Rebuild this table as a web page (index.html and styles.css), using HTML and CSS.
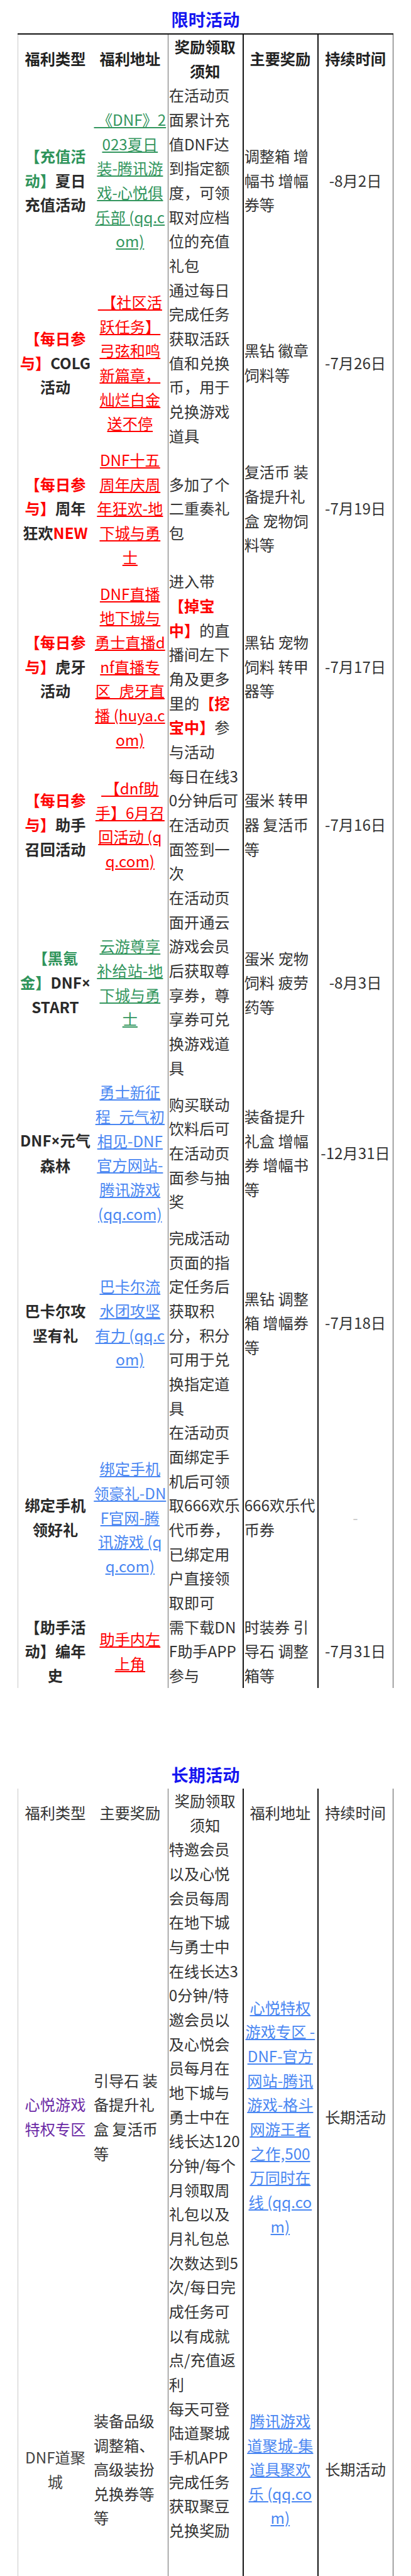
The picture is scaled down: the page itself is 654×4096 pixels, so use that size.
FILE: index.html
```html
<!DOCTYPE html>
<html lang="zh-CN">
<head>
<meta charset="utf-8">
<title>DNF 福利活动</title>
<link rel="stylesheet" href="styles.css">
</head>
<body>
<div class="page">
  <h2 class="title">限时活动</h2>
  <table class="tbl tbl-1">
    <colgroup><col><col><col><col><col></colgroup>
    <thead>
      <tr class="bk">
        <th>福利类型</th><th>福利地址</th><th>奖励领取须知</th><th>主要奖励</th><th>持续时间</th>
      </tr>
    </thead>
    <tbody>
      <tr class="bk">
        <td><span class="g">【充值活</span><span class="g">动】</span>夏日充值活动</td>
        <td><a class="lk lk-g">&nbsp;《DNF》2023夏日装-腾讯游戏-心悦俱乐部 (qq.com)</a></td>
        <td>在活动页面累计充值DNF达到指定额度，可领取对应档位的充值礼包</td>
        <td>调整箱 增幅书 增幅券等</td>
        <td>-8月2日</td>
      </tr>
      <tr>
        <td><span class="r">【每日参</span><span class="r">与】</span>COLG活动</td>
        <td><a class="lk lk-r">&nbsp;【社区活跃任务】弓弦和鸣新篇章，灿烂白金送不停</a></td>
        <td>通过每日完成任务获取活跃值和兑换币，用于兑换游戏道具</td>
        <td>黑钻 徽章 饲料等</td>
        <td>-7月26日</td>
      </tr>
      <tr class="bk">
        <td><span class="r">【每日参</span><span class="r">与】</span>周年狂欢<span class="r">NEW</span></td>
        <td><a class="lk lk-r">DNF十五周年庆周年狂欢-地下城与勇士</a></td>
        <td>多加了个二重奏礼包</td>
        <td>复活币 装备提升礼盒 宠物饲料等</td>
        <td>-7月19日</td>
      </tr>
      <tr class="bk">
        <td><span class="r">【每日参</span><span class="r">与】</span>虎牙活动</td>
        <td><a class="lk lk-r">DNF直播地下城与勇士直播dnf直播专区_虎牙直播 (huya.com)</a></td>
        <td>进入带<span class="r strong">【掉宝</span><span class="r strong">中】</span>的直播间左下角及更多里的<span class="r strong">【挖</span><span class="r strong">宝中】</span>参与活动</td>
        <td>黑钻 宠物饲料 转甲器等</td>
        <td>-7月17日</td>
      </tr>
      <tr class="lt">
        <td><span class="r">【每日参</span><span class="r">与】</span>助手召回活动</td>
        <td><a class="lk lk-r">&nbsp;【dnf助手】6月召回活动 (qq.com)</a></td>
        <td>每日在线30分钟后可在活动页面签到一次</td>
        <td>蛋米 转甲器 复活币等</td>
        <td>-7月16日</td>
      </tr>
      <tr class="md">
        <td><span class="g">【黑氪</span><span class="g">金】</span>DNF<span class="times">×</span>START</td>
        <td><a class="lk lk-g">云游尊享补给站-地下城与勇士</a></td>
        <td>在活动页面开通云游戏会员后获取尊享券，尊享券可兑换游戏道具</td>
        <td>蛋米 宠物饲料 疲劳药等</td>
        <td>-8月3日</td>
      </tr>
      <tr class="bk">
        <td>DNF<span class="times">×</span>元气森林</td>
        <td><a class="lk lk-b">勇士新征程_元气初相见-DNF官方网站-腾讯游戏 (qq.com)</a></td>
        <td>购买联动饮料后可在活动页面参与抽奖</td>
        <td>装备提升礼盒 增幅券 增幅书等</td>
        <td>-12月31日</td>
      </tr>
      <tr class="bk">
        <td>巴卡尔攻坚有礼</td>
        <td><a class="lk lk-b">巴卡尔流水团攻坚有力 (qq.com)</a></td>
        <td>完成活动页面的指定任务后获取积分，积分可用于兑换指定道具</td>
        <td>黑钻 调整箱 增幅券等</td>
        <td>-7月18日</td>
      </tr>
      <tr class="bk">
        <td>绑定手机领好礼</td>
        <td><a class="lk lk-b">绑定手机领豪礼-DNF官网-腾讯游戏 (qq.com)</a></td>
        <td>在活动页面绑定手机后可领取666欢乐代币券，已绑定用户直接领取即可</td>
        <td>666欢乐代币券</td>
        <td><span class="muted">-</span></td>
      </tr>
      <tr class="bk">
        <td>【助手活动】编年史</td>
        <td><a class="lk lk-r">助手内左上角</a></td>
        <td>需下载DNF助手APP参与</td>
        <td>时装券 引导石 调整箱等</td>
        <td>-7月31日</td>
      </tr>
    </tbody>
  </table>

  <h2 class="title title-2">长期活动</h2>
  <table class="tbl tbl-2">
    <colgroup><col><col><col><col><col></colgroup>
    <thead>
      <tr class="bk">
        <th>福利类型</th><th>主要奖励</th><th>奖励领取须知</th><th>福利地址</th><th>持续时间</th>
      </tr>
    </thead>
    <tbody>
      <tr class="bk">
        <td><span class="p">心悦游戏特权专区</span></td>
        <td>引导石 装备提升礼盒 复活币等</td>
        <td>特邀会员以及心悦会员每周在地下城与勇士中在线长达30分钟/特邀会员以及心悦会员每月在地下城与勇士中在线长达120分钟/每个月领取周礼包以及月礼包总次数达到5次/每日完成任务可以有成就点/充值返利</td>
        <td><a class="lk lk-b">心悦特权游戏专区 - DNF-官方网站-腾讯游戏-格斗网游王者之作,500万同时在线 (qq.com)</a></td>
        <td>长期活动</td>
      </tr>
      <tr>
        <td>DNF道聚城</td>
        <td>装备品级调整箱、高级装扮兑换券等等</td>
        <td>每天可登陆道聚城手机APP完成任务获取聚豆兑换奖励</td>
        <td><a class="lk lk-b">腾讯游戏道聚城-集道具聚欢乐 (qq.com)</a></td>
        <td>长期活动</td>
      </tr>
      <tr class="tail">
        <td></td><td></td><td></td><td></td><td></td>
      </tr>
    </tbody>
  </table>
</div>
</body>
</html>
```

FILE: styles.css
```css
html, body {
  margin: 0;
  padding: 0;
  background: #fff;
}

body {
  font-family: "Noto Sans CJK SC", "Noto Sans", sans-serif;
  font-size: 24.2px;
  line-height: 38.66px;
  color: #333;
  text-spacing-trim: space-all;
}

.page {
  padding: 8.5px 28px 0;
}

.title {
  margin: 0 0 1px;
  text-align: center;
  font-size: 27.2px;
  line-height: 43.5px;
  font-weight: 700;
  color: #1616f0;
}

.title-2 {
  margin-top: 116px;
}

.tbl {
  width: 100%;
  table-layout: fixed;
  border-collapse: collapse;
  word-break: break-all;
}

.tbl col {
  width: 20%;
}

.tbl th,
.tbl td {
  padding: 0 2px 0 1px;
  border: 0;
  vertical-align: middle;
  font-weight: 400;
}

/* vertical rules */
.tbl tr > :nth-child(1) { border-left: 1px solid #c9c9c9; }
.tbl tr > :nth-child(3) { border-left: 1px solid #6a6a6a; }
.tbl tr > :nth-child(4) { border-left: 2px solid #141414; }
.tbl tr > :nth-child(5) { border-left: 2px solid #141414; border-right: 1px solid #555; }

/* horizontal rules */
.tbl-1 thead th { border-top: 2px solid #141414; }
.bk > * { border-bottom: 2px solid #141414; }
.lt > * { border-bottom: 2px solid #d6d6d6; }
.md > * { border-bottom: 2px solid #8c8c8c; }

/* headers */
.tbl th { text-align: center; }
.tbl-1 th { font-weight: 700; color: #222; }
.tbl-2 th { color: #333; }

/* column alignment, table 1 */
.tbl-1 td:nth-child(1),
.tbl-1 td:nth-child(2),
.tbl-1 td:nth-child(5) { text-align: center; }
.tbl-1 td:nth-child(3),
.tbl-1 td:nth-child(4) { text-align: left; }
.tbl-1 td:nth-child(1) { font-weight: 700; color: #2a2a2a; }

/* column alignment, table 2 */
.tbl-2 td:nth-child(1),
.tbl-2 td:nth-child(4),
.tbl-2 td:nth-child(5) { text-align: center; }
.tbl-2 td:nth-child(2),
.tbl-2 td:nth-child(3) { text-align: left; }
.tbl-2 td:nth-child(1) { color: #444; }

.tail td { height: 60px; }

/* colours */
.g { color: #2f945b; }
.r { color: #ff0000; }
.p { color: #6c2aa6; }
.strong { font-weight: 700; }
.muted { color: #c8c8c8; }
.times { font-family: "Noto Sans", "Liberation Sans", sans-serif; }

.lk { text-decoration: underline; }
.lk-g { color: #33965e; }
.lk-r { color: #ff0000; }
.lk-b { color: #4a87f2; }
```
